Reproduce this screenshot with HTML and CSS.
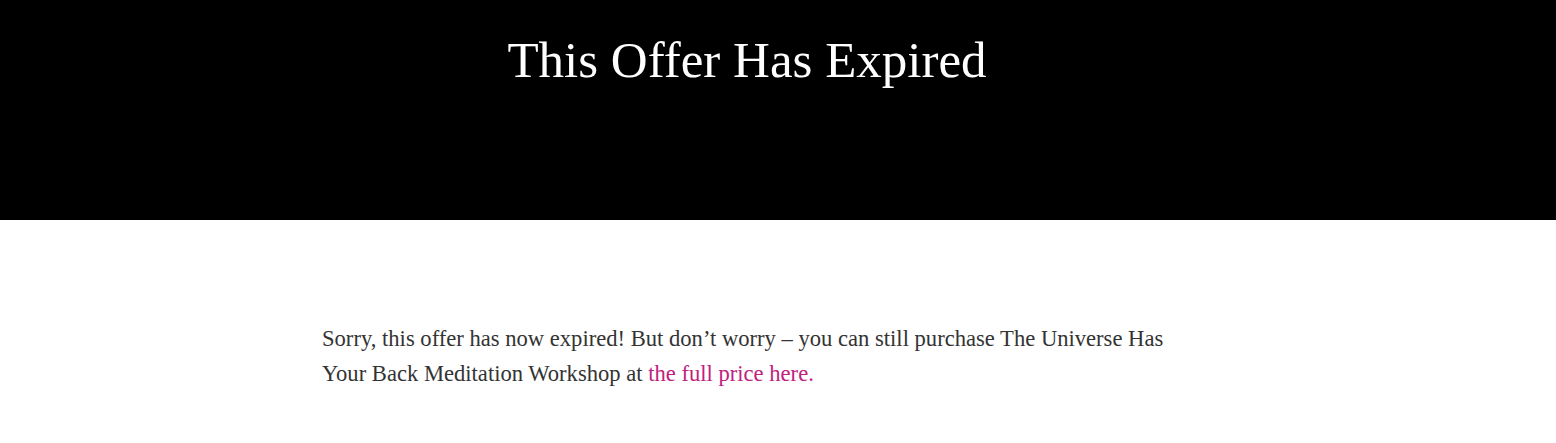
FILE: index.html
```html
<!DOCTYPE html>
<html>
<head>
<meta charset="utf-8">
<link rel="stylesheet" href="styles.css">
</head>
<body>
<header class="hero">
  <div class="wrap">
    <h1 class="title">This Offer Has Expired</h1>
  </div>
</header>
<main class="content">
  <div class="wrap">
    <p class="msg">Sorry, this offer has now expired! But don’t worry – you can still purchase The Universe Has Your Back Meditation Workshop at <a href="#" class="link">the full price here.</a></p>
  </div>
</main>
</body>
</html>
```

FILE: styles.css
```css
html, body {
  margin: 0;
  padding: 0;
  background: #fff;
}
body {
  font-family: "Liberation Serif", "DejaVu Serif", serif;
}
.wrap {
  width: 850px;
  margin-left: 322px;
}
.hero {
  background: #000;
  height: 220px;
  box-sizing: border-box;
  padding-top: 28px;
}
.title {
  margin: 0;
  color: #fff;
  font-weight: 400;
  font-size: 51px;
  line-height: 64px;
  text-align: center;
}
.content {
  padding-top: 101px;
}
.msg {
  margin: 0;
  color: #333;
  font-size: 22.6px;
  line-height: 35px;
}
.link {
  color: #c1207e;
  text-decoration: none;
}
```
